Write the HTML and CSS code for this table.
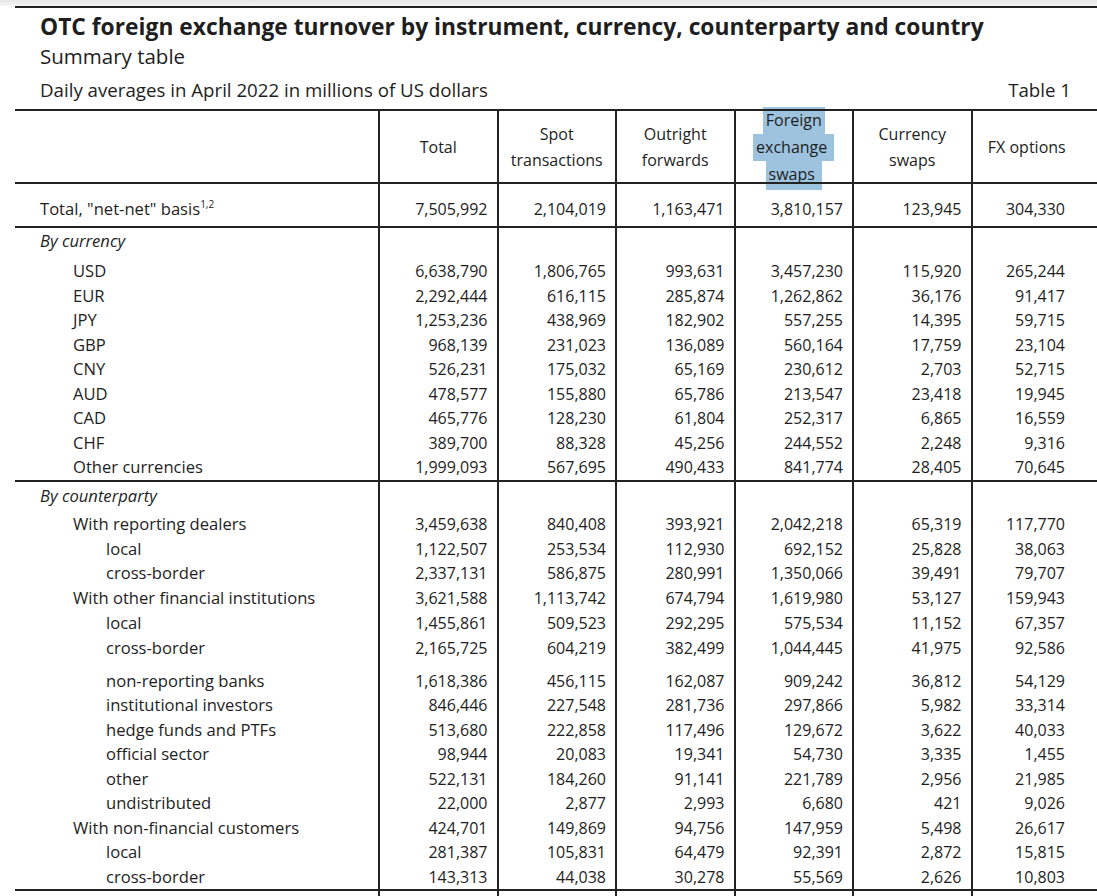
FILE: index.html
```html
<!DOCTYPE html>
<html lang="en">
<head>
<meta charset="utf-8">
<title>OTC foreign exchange turnover</title>
<link rel="stylesheet" href="styles.css">
</head>
<body>
<div class="topbar"></div>
<div class="topline"></div>
<header class="head">
  <h1 class="title">OTC foreign exchange turnover by instrument, currency, counterparty and country</h1>
  <div class="subtitle">Summary table</div>
  <div class="meta"><span>Daily averages in April 2022 in millions of US dollars</span><span class="tabno">Table 1</span></div>
</header>
<table class="fx">
  <colgroup>
    <col class="c-label"><col class="c-num"><col class="c-num"><col class="c-num"><col class="c-num"><col class="c-num"><col class="c-last">
  </colgroup>
  <thead>
    <tr class="hrow">
      <th class="lab"></th>
      <th><div class="hd"><div>Total</div></div></th>
      <th><div class="hd"><div>Spot<br>transactions</div></div></th>
      <th><div class="hd"><div>Outright<br>forwards</div></div></th>
      <th><div class="hd"><div class="selwrap"><span class="sel">Foreign</span><br><span class="sel">exchange&nbsp;</span><br><span class="sel sel3">swaps&nbsp;</span></div></div></th>
      <th><div class="hd"><div>Currency<br>swaps</div></div></th>
      <th class="last"><div class="hd"><div>FX options</div></div></th>
    </tr>
  </thead>
  <tbody>
    <tr class="total sect-end">
      <td class="lab l0">Total, "net-net" basis<sup>1,2</sup></td>
      <td>7,505,992</td><td>2,104,019</td><td>1,163,471</td><td>3,810,157</td><td>123,945</td><td class="last">304,330</td>
    </tr>
    <tr class="group g1">
      <td class="lab l0"><em>By currency</em></td><td></td><td></td><td></td><td></td><td></td><td class="last"></td>
    </tr>
    <tr class="r"><td class="lab l1">USD</td><td>6,638,790</td><td>1,806,765</td><td>993,631</td><td>3,457,230</td><td>115,920</td><td class="last">265,244</td></tr>
    <tr class="r"><td class="lab l1">EUR</td><td>2,292,444</td><td>616,115</td><td>285,874</td><td>1,262,862</td><td>36,176</td><td class="last">91,417</td></tr>
    <tr class="r"><td class="lab l1">JPY</td><td>1,253,236</td><td>438,969</td><td>182,902</td><td>557,255</td><td>14,395</td><td class="last">59,715</td></tr>
    <tr class="r"><td class="lab l1">GBP</td><td>968,139</td><td>231,023</td><td>136,089</td><td>560,164</td><td>17,759</td><td class="last">23,104</td></tr>
    <tr class="r"><td class="lab l1">CNY</td><td>526,231</td><td>175,032</td><td>65,169</td><td>230,612</td><td>2,703</td><td class="last">52,715</td></tr>
    <tr class="r"><td class="lab l1">AUD</td><td>478,577</td><td>155,880</td><td>65,786</td><td>213,547</td><td>23,418</td><td class="last">19,945</td></tr>
    <tr class="r"><td class="lab l1">CAD</td><td>465,776</td><td>128,230</td><td>61,804</td><td>252,317</td><td>6,865</td><td class="last">16,559</td></tr>
    <tr class="r"><td class="lab l1">CHF</td><td>389,700</td><td>88,328</td><td>45,256</td><td>244,552</td><td>2,248</td><td class="last">9,316</td></tr>
    <tr class="r sect-end"><td class="lab l1">Other currencies</td><td>1,999,093</td><td>567,695</td><td>490,433</td><td>841,774</td><td>28,405</td><td class="last">70,645</td></tr>
    <tr class="group g2">
      <td class="lab l0"><em>By counterparty</em></td><td></td><td></td><td></td><td></td><td></td><td class="last"></td>
    </tr>
    <tr class="r rw"><td class="lab l1">With reporting dealers</td><td>3,459,638</td><td>840,408</td><td>393,921</td><td>2,042,218</td><td>65,319</td><td class="last">117,770</td></tr>
    <tr class="r rw"><td class="lab l2">local</td><td>1,122,507</td><td>253,534</td><td>112,930</td><td>692,152</td><td>25,828</td><td class="last">38,063</td></tr>
    <tr class="r rw"><td class="lab l2">cross-border</td><td>2,337,131</td><td>586,875</td><td>280,991</td><td>1,350,066</td><td>39,491</td><td class="last">79,707</td></tr>
    <tr class="r rw"><td class="lab l1">With other financial institutions</td><td>3,621,588</td><td>1,113,742</td><td>674,794</td><td>1,619,980</td><td>53,127</td><td class="last">159,943</td></tr>
    <tr class="r rw"><td class="lab l2">local</td><td>1,455,861</td><td>509,523</td><td>292,295</td><td>575,534</td><td>11,152</td><td class="last">67,357</td></tr>
    <tr class="r rw"><td class="lab l2">cross-border</td><td>2,165,725</td><td>604,219</td><td>382,499</td><td>1,044,445</td><td>41,975</td><td class="last">92,586</td></tr>
    <tr class="spacer"><td class="lab"></td><td></td><td></td><td></td><td></td><td></td><td class="last"></td></tr>
    <tr class="r"><td class="lab l2">non-reporting banks</td><td>1,618,386</td><td>456,115</td><td>162,087</td><td>909,242</td><td>36,812</td><td class="last">54,129</td></tr>
    <tr class="r"><td class="lab l2">institutional investors</td><td>846,446</td><td>227,548</td><td>281,736</td><td>297,866</td><td>5,982</td><td class="last">33,314</td></tr>
    <tr class="r"><td class="lab l2">hedge funds and PTFs</td><td>513,680</td><td>222,858</td><td>117,496</td><td>129,672</td><td>3,622</td><td class="last">40,033</td></tr>
    <tr class="r"><td class="lab l2">official sector</td><td>98,944</td><td>20,083</td><td>19,341</td><td>54,730</td><td>3,335</td><td class="last">1,455</td></tr>
    <tr class="r"><td class="lab l2">other</td><td>522,131</td><td>184,260</td><td>91,141</td><td>221,789</td><td>2,956</td><td class="last">21,985</td></tr>
    <tr class="r"><td class="lab l2">undistributed</td><td>22,000</td><td>2,877</td><td>2,993</td><td>6,680</td><td>421</td><td class="last">9,026</td></tr>
    <tr class="r"><td class="lab l1">With non-financial customers</td><td>424,701</td><td>149,869</td><td>94,756</td><td>147,959</td><td>5,498</td><td class="last">26,617</td></tr>
    <tr class="r"><td class="lab l2">local</td><td>281,387</td><td>105,831</td><td>64,479</td><td>92,391</td><td>2,872</td><td class="last">15,815</td></tr>
    <tr class="r sect-end"><td class="lab l2">cross-border</td><td>143,313</td><td>44,038</td><td>30,278</td><td>55,569</td><td>2,626</td><td class="last">10,803</td></tr>
    <tr class="tail"><td class="lab"></td><td></td><td></td><td></td><td></td><td></td><td class="last"></td></tr>
  </tbody>
</table>
</body>
</html>
```
FILE: styles.css
```css
html {
  margin: 0;
  padding: 0;
  background: #ffffff;
}
body {
  margin: 0;
  padding: 0;
  font-family: "Open Sans", "Noto Sans", sans-serif;
  color: #1e1e1e;
  overflow: hidden;
  width: 1097px;
  height: 896px;
}
.topbar {
  height: 6px;
  background: linear-gradient(#e6e6e6, #f6f6f6);
}
.topline {
  margin-left: 15px;
  border-top: 2px solid #222;
}
.head {
  padding: 4px 26px 0 40px;
}
.title {
  margin: 0;
  font-size: 22.8px;
  font-weight: 700;
  line-height: 30px;
}
.subtitle {
  font-size: 20.5px;
  line-height: 28px;
  margin-top: 0;
}
.meta {
  display: flex;
  justify-content: space-between;
  font-size: 18.7px;
  line-height: 24px;
  margin-top: 8px;
}
.fx {
  margin-left: 15px;
  margin-top: 7px;
  width: 1082px;
  table-layout: fixed;
  border-collapse: collapse;
  font-size: 16px;
}
.c-label { width: 364px; }
.c-num { width: 118.5px; }
.c-last { width: 125.5px; }
.fx th, .fx td {
  padding: 0;
  border-left: 2px solid #222;
}
.fx th.lab, .fx td.lab {
  border-left: none;
}
.hrow {
  border-top: 2px solid #222;
  border-bottom: 2px solid #222;
}
.fx th {
  font-weight: 400;
  height: 71px;
}
.hd {
  height: 71px;
  display: flex;
  align-items: center;
  justify-content: center;
  text-align: center;
  line-height: 26px;
}
.fx th.last .hd {
  padding-right: 16px;
}
.selwrap {
  line-height: 27px;
  padding-top: 3px;
}
.sel {
  display: inline-block;
  background: #9dc3de;
  padding: 0 3px;
  position: relative;
  z-index: -1;
  height: 27px;
}
.sel3 {
  height: 29px;
}
.fx td {
  text-align: right;
  padding-right: 9px;
  line-height: 20px;
  white-space: nowrap;
}
.fx td.last {
  padding-right: 32px;
}
.fx td.lab {
  text-align: left;
  font-size: 16.6px;
}
.l0 { padding-left: 25px !important; }
.l1 { padding-left: 58px !important; }
.l2 { padding-left: 91px !important; }
.total td {
  height: 35px;
  vertical-align: bottom;
  padding-bottom: 7px;
}
sup {
  font-size: 10px;
  line-height: 0;
  vertical-align: 7px;
}
.sect-end {
  border-bottom: 2px solid #222;
}
.group td {
  vertical-align: top;
}
.g1 td {
  height: 28px;
  padding-top: 3px;
}
.g2 td {
  height: 26px;
  padding-top: 4px;
}
.r td {
  height: 24.5px;
  vertical-align: middle;
}
.rw td {
  height: 24.8px;
}
.spacer td {
  height: 8px;
}
.tail td {
  height: 20px;
}
```
